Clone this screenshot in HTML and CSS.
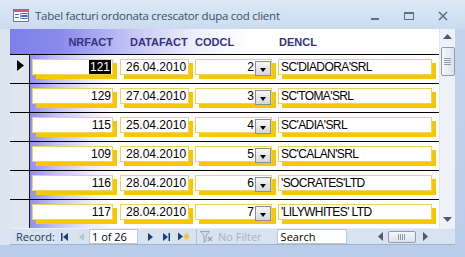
FILE: index.html
```html
<!DOCTYPE html>
<html lang="ro">
<head>
    <meta charset="UTF-8">
    <meta name="viewport" content="width=device-width, initial-scale=1.0">
    <title>Tabel facturi</title>
    <link rel="stylesheet" href="styles.css">
</head>
<body>
<div class="window">
    <div class="titlebar">
        <svg class="formIcon" width="16" height="13" viewBox="0 0 16 13">
            <rect x="0.5" y="0.5" width="15" height="12" fill="#fff" stroke="#6b7fa0"/>
            <rect x="1" y="1" width="14" height="2" fill="#d9566b"/>
            <rect x="2" y="5" width="4" height="1" fill="#3d6fb6"/>
            <rect x="2" y="8" width="4" height="1" fill="#3d6fb6"/>
            <rect x="8" y="4.5" width="6" height="2" fill="none" stroke="#3d6fb6" stroke-width="1"/>
            <rect x="8" y="7.5" width="6" height="2" fill="none" stroke="#3d6fb6" stroke-width="1"/>
        </svg>
        <span class="title">Tabel facturi ordonata crescator dupa cod client</span>
        <div class="controls">
            <svg width="10" height="10" viewBox="0 0 10 10"><rect x="1" y="7" width="8" height="2" fill="#5f6f87"/></svg>
            <svg width="10" height="10" viewBox="0 0 10 10"><rect x="0.5" y="1.5" width="9" height="7" fill="none" stroke="#5f6f87"/><rect x="0" y="1" width="10" height="2" fill="#5f6f87"/></svg>
            <svg width="10" height="10" viewBox="0 0 10 10"><path d="M1 1 L9 9 M9 1 L1 9" stroke="#5f6f87" stroke-width="1.6"/></svg>
        </div>
    </div>
    <div class="frame">
        <div class="form">
            <div class="main">
                <div class="sheet">
                    <div class="header">
                        <div class="selector"></div>
                        <span class="cNr hNr">NRFACT</span>
                        <span class="cDate hDate">DATAFACT</span>
                        <span class="cCod">CODCL</span>
                        <span class="cDen hDen">DENCL</span>
                    </div>

                    <div class="row">
                        <div class="selector"><svg width="7" height="11" viewBox="0 0 7 11"><path d="M0 0 L7 5.5 L0 11 Z" fill="#000"/></svg></div>
                        <div class="box cNr num"><span class="picked">121</span></div>
                        <div class="box cDate">26.04.2010</div>
                        <div class="box cCod combo"><span>2</span><span class="drop"></span></div>
                        <div class="box cDen">SC'DIADORA'SRL</div>
                    </div>
                    <div class="row">
                        <div class="selector"></div>
                        <div class="box cNr num">129</div>
                        <div class="box cDate">27.04.2010</div>
                        <div class="box cCod combo"><span>3</span><span class="drop"></span></div>
                        <div class="box cDen">SC'TOMA'SRL</div>
                    </div>
                    <div class="row">
                        <div class="selector"></div>
                        <div class="box cNr num">115</div>
                        <div class="box cDate">25.04.2010</div>
                        <div class="box cCod combo"><span>4</span><span class="drop"></span></div>
                        <div class="box cDen">SC'ADIA'SRL</div>
                    </div>
                    <div class="row">
                        <div class="selector"></div>
                        <div class="box cNr num">109</div>
                        <div class="box cDate">28.04.2010</div>
                        <div class="box cCod combo"><span>5</span><span class="drop"></span></div>
                        <div class="box cDen">SC'CALAN'SRL</div>
                    </div>
                    <div class="row">
                        <div class="selector"></div>
                        <div class="box cNr num">116</div>
                        <div class="box cDate">28.04.2010</div>
                        <div class="box cCod combo"><span>6</span><span class="drop"></span></div>
                        <div class="box cDen">'SOCRATES'LTD</div>
                    </div>
                    <div class="row">
                        <div class="selector"></div>
                        <div class="box cNr num">117</div>
                        <div class="box cDate">28.04.2010</div>
                        <div class="box cCod combo"><span>7</span><span class="drop"></span></div>
                        <div class="box cDen">'LILYWHITES' LTD</div>
                    </div>
                </div>
                <div class="vscroll">
                    <svg class="arrowUp" width="9" height="5" viewBox="0 0 9 5"><path d="M0 5 L4.5 0 L9 5 Z" fill="#4d5a6e"/></svg>
                    <div class="vthumb"><i></i><i></i><i></i><i></i></div>
                    <svg class="arrowDown" width="9" height="5" viewBox="0 0 9 5"><path d="M0 0 L4.5 5 L9 0 Z" fill="#4d5a6e"/></svg>
                </div>
            </div>
            <div class="navbar">
                <span class="recLabel">Record:</span>
                <svg class="nFirst" width="7" height="8" viewBox="0 0 7 8"><rect x="0" y="0" width="1.5" height="8" fill="#1d3f78"/><path d="M7 0 L2 4 L7 8 Z" fill="#1d3f78"/></svg>
                <svg class="nPrev" width="5" height="8" viewBox="0 0 5 8"><path d="M5 0 L0 4 L5 8 Z" fill="#b4c3d8"/></svg>
                <span class="recBox">1 of 26</span>
                <svg class="nNext" width="5" height="8" viewBox="0 0 5 8"><path d="M0 0 L5 4 L0 8 Z" fill="#1d3f78"/></svg>
                <svg class="nLast" width="7" height="8" viewBox="0 0 7 8"><path d="M0 0 L5 4 L0 8 Z" fill="#1d3f78"/><rect x="5.5" y="0" width="1.5" height="8" fill="#1d3f78"/></svg>
                <svg class="nNew" width="12" height="9" viewBox="0 0 12 9"><path d="M0 0.5 L5 4.5 L0 8.5 Z" fill="#1d3f78"/><circle cx="8.5" cy="4.5" r="2.3" fill="#f2c23a"/><path d="M8.5 0 V9 M4.5 4.5 H12 M6 2 L11 7 M11 2 L6 7" stroke="#f2c23a" stroke-width="0.8"/></svg>
                <span class="navSep"></span>
                <svg class="nFilter" width="13" height="12" viewBox="0 0 13 12"><path d="M0.5 0.5 H9.5 L6 5 V10 L4 11.5 V5 Z" fill="#d3dbe6" stroke="#9aa6b6"/><path d="M8 6 L12 10 M12 6 L8 10" stroke="#9aa6b6" stroke-width="1.4"/></svg>
                <span class="noFilter">No Filter</span>
                <span class="searchBox">Search</span>
                <div class="hscroll">
                    <svg width="5" height="9" viewBox="0 0 5 9"><path d="M5 0 L0 4.5 L5 9 Z" fill="#4d5a6e"/></svg>
                    <div class="hthumb"><i></i><i></i><i></i><i></i></div>
                    <svg width="5" height="9" viewBox="0 0 5 9"><path d="M0 0 L5 4.5 L0 9 Z" fill="#4d5a6e"/></svg>
                </div>
            </div>
        </div>
    </div>
</div>
</body>
</html>
```

FILE: styles.css
```css
*{
    box-sizing: border-box;
    margin: 0;
    padding: 0;
}
body{
    width: 465px;
    height: 257px;
    overflow: hidden;
    background: #c3d5ed;
    font-family: 'Liberation Sans', Arial, sans-serif;
}
.window{
    display: flex;
    flex-direction: column;
    height: 257px;
}

/* title bar */
.titlebar{
    height: 29px;
    display: flex;
    align-items: center;
    padding: 2px 0 0 13px;
    background: linear-gradient(#dde8f5, #cbdbef);
}
.formIcon{
    margin-right: 6px;
}
.title{
    font-family: 'Open Sans', sans-serif;
    font-size: 11.5px;
    color: #3f4f6a;
    letter-spacing: -0.25px;
}
.controls{
    margin-left: auto;
    display: flex;
    gap: 24px;
    padding-right: 17px;
}

/* window frame */
.frame{
    flex: 1;
    display: flex;
    padding: 0 10px 12px 0;
    background: linear-gradient(#c3d5ed, #b9cde9);
}
.form{
    width: 455px;
    display: flex;
    flex-direction: column;
    border-left: 10px solid #dbe4f0;
}
.main{
    height: 199px;
    display: flex;
}
.sheet{
    width: 429px;
    overflow: hidden;
    background: #fff;
}

/* header + rows */
.header{
    height: 26px;
    display: flex;
    align-items: center;
    border-bottom: 1px solid #000;
    background: linear-gradient(90deg, #7f7fea 0, #8a8aec 50px, #c3c3f6 120px, #f2f2fd 190px, #fff 240px);
    font-weight: bold;
    font-size: 11px;
    color: #33337f;
}
.header .selector{
    background: none;
    border: none;
}
.hNr{
    text-align: right;
}
.hDate{
    padding-left: 10px;
}
.hDen{
    padding-left: 1px;
}
.row{
    height: 29px;
    display: flex;
    align-items: flex-start;
    border-bottom: 1px solid #000;
    background: linear-gradient(90deg, #9090ee 20px, #c0c0f5 45px, #ebebfc 80px, #fff 105px);
}
.selector{
    width: 20px;
    align-self: stretch;
    background: #dfe6f0;
    border-right: 1px solid #1b1b1b;
    padding: 5px 0 0 7px;
}
.selector svg{
    display: block;
}
.cNr{ width: 81px; margin-left: 2px; }
.cDate{ width: 69px; margin-left: 7px; }
.cCod{ width: 77px; margin-left: 6px; }
.cDen{ width: 154px; margin-left: 6px; }

.box{
    margin-top: 4px;
    height: 16px;
    border: 1px solid #f0d25c;
    background: #fff;
    box-shadow: 4px 4px 0 #f7c700;
    font-size: 12px;
    line-height: 14px;
    color: #000;
    padding-left: 5px;
    white-space: nowrap;
}
.num{
    text-align: right;
    padding-right: 1px;
}
.picked{
    display: inline-block;
    background: #000;
    color: #fff;
    padding: 0 1px;
}
.combo{
    display: flex;
    justify-content: flex-end;
    align-items: flex-start;
    padding-right: 0;
}
.combo span:first-child{
    margin-right: 1px;
}
.drop{
    width: 16px;
    height: 15px;
    margin-top: 1px;
    border: 1px solid #8b8f96;
    background: linear-gradient(#f7f7f7, #d4d6da);
    position: relative;
}
.drop::after{
    content: "";
    position: absolute;
    left: 4px;
    top: 6px;
    border-left: 3.5px solid transparent;
    border-right: 3.5px solid transparent;
    border-top: 4px solid #000;
}
.cDen.box{
    padding-left: 2px;
    letter-spacing: -0.6px;
}

/* vertical scroll bar */
.vscroll{
    width: 16px;
    display: flex;
    flex-direction: column;
    align-items: center;
    background: #eef2f8;
    border-left: 1px solid #e0e6ef;
    padding-top: 5px;
}
.arrowDown{
    margin-top: auto;
    margin-bottom: 6px;
}
.vthumb{
    margin-top: 8px;
    width: 14px;
    height: 29px;
    border: 1px solid #8e9cb0;
    border-radius: 2px;
    background: linear-gradient(90deg, #f6f8fb, #dbe2ec);
    display: flex;
    flex-direction: column;
    justify-content: center;
    align-items: center;
    gap: 1px;
}
.vthumb i{
    width: 7px;
    height: 1px;
    background: #8e9cb0;
}

/* navigation bar */
.navbar{
    height: 17px;
    display: flex;
    align-items: center;
    background: #d8e3f1;
    border-top: 1px solid #e9eff8;
    border-bottom: 1px solid #9fb4d2;
    font-family: 'Open Sans', sans-serif;
    font-size: 11px;
    color: #23395e;
    padding-left: 6px;
}
.recLabel{
    width: 45px;
}
.nPrev{ margin-left: 11px; }
.recBox{
    margin-left: 5px;
    width: 49px;
    height: 15px;
    background: #fff;
    border: 1px solid #b8c7db;
    line-height: 13px;
    padding-left: 2px;
    color: #000;
}
.nNext{ margin-left: 10px; }
.nLast{ margin-left: 10px; }
.nNew{ margin-left: 8px; }
.navSep{
    margin-left: 6px;
    width: 1px;
    height: 15px;
    background: #b2c2d8;
}
.nFilter{ margin-left: 3px; }
.noFilter{
    margin-left: 5px;
    color: #a9b2bf;
}
.searchBox{
    margin-left: 15px;
    width: 70px;
    height: 15px;
    background: #fff;
    border: 1px solid #b8c7db;
    line-height: 13px;
    padding-left: 3px;
    color: #000;
}
.hscroll{
    margin-left: 31px;
    display: flex;
    align-items: center;
}
.hthumb{
    margin: 0 7px 0 5px;
    width: 28px;
    height: 12px;
    border: 1px solid #8e9cb0;
    border-radius: 2px;
    background: linear-gradient(#f6f8fb, #dbe2ec);
    display: flex;
    justify-content: center;
    align-items: center;
    gap: 1px;
}
.hthumb i{
    width: 1px;
    height: 6px;
    background: #8e9cb0;
}
```
